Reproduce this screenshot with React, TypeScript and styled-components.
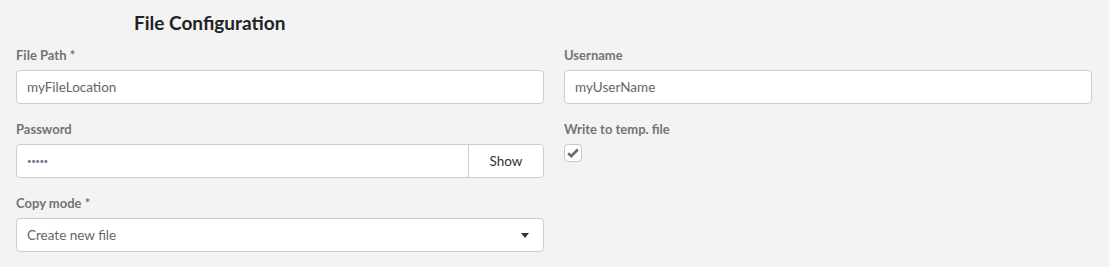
import React, { useState } from "react";
import styled, { createGlobalStyle } from "styled-components";

const GlobalStyle = createGlobalStyle`
  html, body {
    margin: 0;
    padding: 0;
    background: #f3f3f3;
    font-family: Lato, "Open Sans", sans-serif;
  }
`;

const Page = styled.div`
  width: 1109px;
  height: 267px;
  background: #f3f3f3;
  box-sizing: border-box;
  padding: 11px 18px 0 16px;
`;

const Title = styled.h2`
  margin: 0 0 13px 118px;
  font-size: 19px;
  line-height: 24px;
  font-weight: 700;
  color: #222;
`;

const Grid = styled.div`
  display: grid;
  grid-template-columns: 528px 528px;
  column-gap: 20px;
  row-gap: 18px;
`;

const Field = styled.div`
  display: flex;
  flex-direction: column;
`;

const Label = styled.label`
  font-size: 13px;
  line-height: 14px;
  font-weight: 700;
  color: #737373;
  margin-bottom: 8px;
`;

const Box = styled.div`
  display: flex;
  align-items: center;
  height: 34px;
  box-sizing: border-box;
  background: #fff;
  border: 1px solid #cdcdcd;
  border-radius: 4px;
  overflow: hidden;
`;

const Input = styled.input<{ $secret?: boolean }>`
  flex: 1;
  height: 100%;
  border: none;
  outline: none;
  padding: 0 10px;
  font-family: inherit;
  font-size: ${(p) => (p.$secret ? "8px" : "13.5px")};
  letter-spacing: ${(p) => (p.$secret ? "-0.5px" : "normal")};
  color: ${(p) => (p.$secret ? "#6a7488" : "#666")};
  background: transparent;
`;

const ShowButton = styled.button`
  width: 75px;
  height: 100%;
  border: none;
  border-left: 1px solid #cdcdcd;
  background: #fff;
  font-family: inherit;
  font-size: 13.5px;
  color: #333;
  padding: 0;
  cursor: pointer;
`;

const SelectBox = styled(Box)`
  justify-content: space-between;
  padding: 0 14px 0 10px;
  font-size: 13.5px;
  color: #666;
`;

const Caret = styled.span`
  width: 0;
  height: 0;
  border-left: 4px solid transparent;
  border-right: 4px solid transparent;
  border-top: 5px solid #333;
`;

const Check = styled.button`
  width: 18px;
  height: 18px;
  padding: 0;
  border: 1px solid #c8c8c8;
  border-radius: 4px;
  background: #fff;
  display: flex;
  align-items: center;
  justify-content: center;
  cursor: pointer;
`;

export default function App() {
  const [show, setShow] = useState(false);
  const [checked, setChecked] = useState(true);
  return (
    <>
      <GlobalStyle />
      <Page>
        <Title>File Configuration</Title>
        <Grid>
          <Field>
            <Label>File Path *</Label>
            <Box>
              <Input defaultValue="myFileLocation" />
            </Box>
          </Field>
          <Field>
            <Label>Username</Label>
            <Box>
              <Input defaultValue="myUserName" />
            </Box>
          </Field>
          <Field>
            <Label>Password</Label>
            <Box>
              <Input $secret={!show} type={show ? "text" : "password"} defaultValue="admin" />
              <ShowButton onClick={() => setShow(!show)}>Show</ShowButton>
            </Box>
          </Field>
          <Field>
            <Label>Write to temp. file</Label>
            <Check onClick={() => setChecked(!checked)}>
              {checked && (
                <svg width="12" height="10" viewBox="0 0 12 10">
                  <path d="M1.2 5.2 L4.3 8.2 L10.8 1.5" fill="none" stroke="#6b6b6b" strokeWidth="2.6" />
                </svg>
              )}
            </Check>
          </Field>
          <Field>
            <Label>Copy mode *</Label>
            <SelectBox>
              <span>Create new file</span>
              <Caret />
            </SelectBox>
          </Field>
        </Grid>
      </Page>
    </>
  );
}
